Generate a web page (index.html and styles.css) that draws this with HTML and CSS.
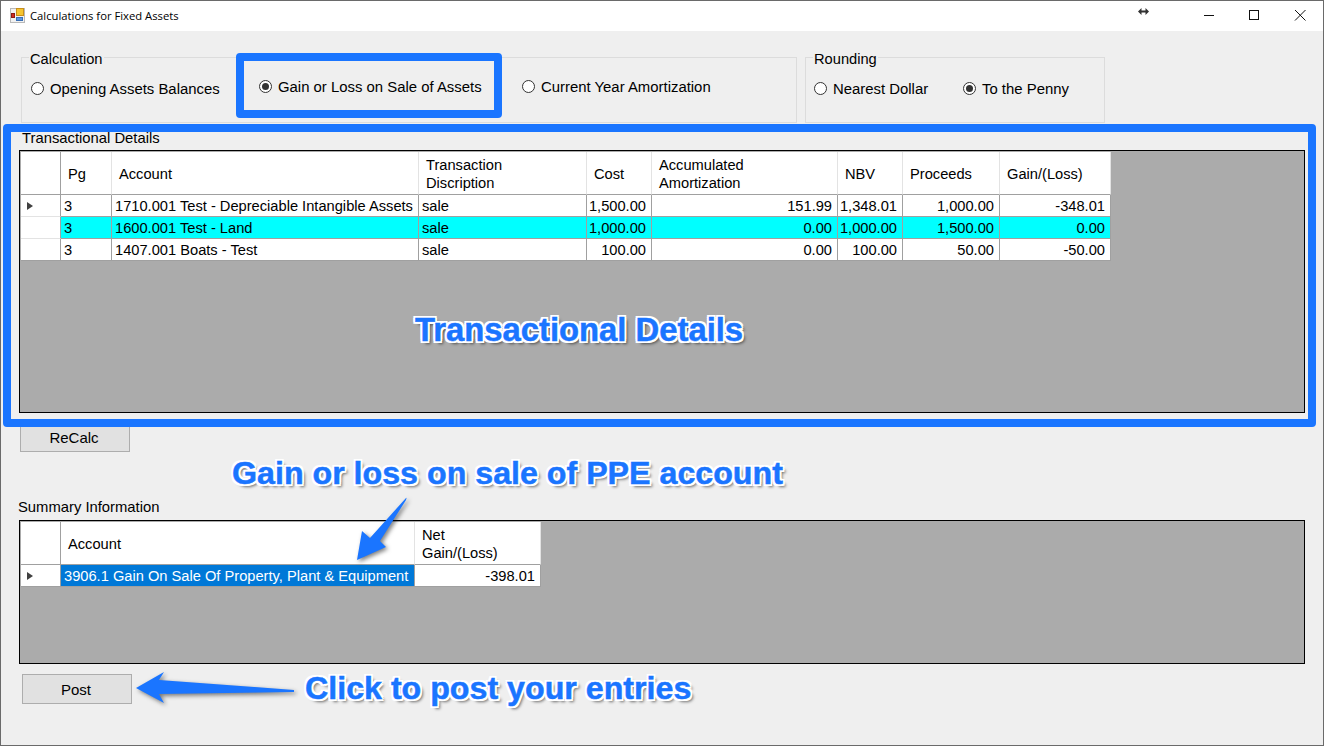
FILE: index.html
```html
<!DOCTYPE html>
<html lang="en">
<head>
<meta charset="utf-8">
<title>Calculations for Fixed Assets</title>
<link rel="stylesheet" href="styles.css">
</head>
<body>
<div class="window">
  <header class="titlebar">
    <svg class="app-icon" width="16" height="16" viewBox="0 0 16 16">
      <rect x="0.5" y="0.5" width="14" height="14" fill="#f1f1f1" stroke="#b9b9b9"/>
      <rect x="6.500" y="0.500" width="7" height="7" fill="#f4c430" stroke="#c98f1a"/>
      <rect x="1.500" y="5.500" width="3" height="4" fill="#d02a20" stroke="#8a1a14"/>
      <rect x="6.500" y="9.500" width="6" height="3" fill="#5c97e0" stroke="#3a6fb5"/>
    </svg>
    <span class="title-text">Calculations for Fixed Assets</span>
    <svg class="cursor-glyph" width="11" height="7" viewBox="0 0 11 7">
      <path d="M0 3.5 3.5 0V2.5H7.5V0L11 3.5 7.5 7V4.5H3.5V7Z" fill="#333"/>
    </svg>
    <div class="win-controls">
      <svg width="46" height="30" viewBox="0 0 46 30"><path d="M19 14.500H29" stroke="#111"/></svg>
      <svg width="46" height="30" viewBox="0 0 46 30"><rect x="18.500" y="9.500" width="9" height="9" fill="none" stroke="#111"/></svg>
      <svg width="46" height="30" viewBox="0 0 46 30"><path d="M18 9 28.500 19.500M28.500 9 18 19.500" stroke="#111" fill="none"/></svg>
    </div>
  </header>

  <main class="content">
    <div class="groups">
      <section class="group group-calc">
        <div class="legend">Calculation</div>
        <div class="options options-calc">
          <label class="option"><span class="radio"></span>Opening Assets Balances</label>
          <label class="option raised"><span class="radio on"></span>Gain or Loss on Sale of Assets</label>
          <label class="option raised"><span class="radio"></span>Current Year Amortization</label>
        </div>
      </section>
      <section class="group group-round">
        <div class="legend">Rounding</div>
        <div class="options options-round">
          <label class="option"><span class="radio"></span>Nearest Dollar</label>
          <label class="option"><span class="radio on"></span>To the Penny</label>
        </div>
      </section>
    </div>

    <div class="section-label details-label">Transactional Details</div>
    <div class="grid grid-details">
      <table class="data">
        <colgroup>
          <col class="c-rh"><col class="c-pg"><col class="c-acct"><col class="c-desc"><col class="c-cost"><col class="c-acc"><col class="c-nbv"><col class="c-proc"><col class="c-gain">
        </colgroup>
        <thead>
          <tr>
            <th></th><th>Pg</th><th>Account</th><th>Transaction<br>Discription</th><th>Cost</th><th>Accumulated<br>Amortization</th><th>NBV</th><th>Proceeds</th><th>Gain/(Loss)</th>
          </tr>
        </thead>
        <tbody>
          <tr>
            <td class="rh"><span class="pointer"></span></td><td>3</td><td>1710.001 Test - Depreciable Intangible Assets</td><td>sale</td><td class="num">1,500.00</td><td class="num">151.99</td><td class="num">1,348.01</td><td class="num">1,000.00</td><td class="num">-348.01</td>
          </tr>
          <tr class="hit">
            <td class="rh"></td><td>3</td><td>1600.001 Test - Land</td><td>sale</td><td class="num">1,000.00</td><td class="num">0.00</td><td class="num">1,000.00</td><td class="num">1,500.00</td><td class="num">0.00</td>
          </tr>
          <tr>
            <td class="rh"></td><td>3</td><td>1407.001 Boats - Test</td><td>sale</td><td class="num">100.00</td><td class="num">0.00</td><td class="num">100.00</td><td class="num">50.00</td><td class="num">-50.00</td>
          </tr>
        </tbody>
      </table>
    </div>

    <button class="btn btn-recalc" type="button">ReCalc</button>

    <div class="section-label summary-label">Summary Information</div>
    <div class="grid grid-summary">
      <table class="data data-summary">
        <colgroup><col class="c-rh"><col class="c-sacct"><col class="c-snet"></colgroup>
        <thead>
          <tr><th></th><th>Account</th><th>Net<br>Gain/(Loss)</th></tr>
        </thead>
        <tbody>
          <tr><td class="rh"><span class="pointer"></span></td><td class="selected">3906.1 Gain On Sale Of Property, Plant &amp; Equipment</td><td class="num">-398.01</td></tr>
        </tbody>
      </table>
    </div>

    <button class="btn btn-post" type="button">Post</button>
  </main>

  <!-- annotations drawn over the window -->
  <div class="callout-box box-gain"></div>
  <div class="callout-box box-details"></div>
  <div class="callout-text text-details">Transactional Details</div>
  <div class="callout-text text-gain">Gain or loss on sale of PPE account</div>
  <div class="callout-text text-post">Click to post your entries</div>
  <svg class="arrow arrow-gain" width="60" height="72" viewBox="0 0 60 72">
    <path d="M53 1 Q54 0 53 3 L27 44 L33 50 L4 63 L9 34 L17 41 Z" fill="#1a75ff"/>
  </svg>
  <svg class="arrow arrow-post" width="166" height="40" viewBox="0 0 166 40">
    <path d="M2 18 L30 2 L25 10 L160 20 L160 22 L25 24 L30 33 Z" fill="#1a75ff"/>
  </svg>
</div>
</body>
</html>
```
FILE: styles.css
```css
* { box-sizing: border-box; }

html, body {
  margin: 0;
  padding: 0;
  width: 1324px;
  height: 746px;
  overflow: hidden;
}

body {
  font-family: "Liberation Sans", Arial, sans-serif;
  font-size: 14.67px;
  color: #000;
  background: #efefef;
}

.window {
  position: relative;
  width: 1324px;
  height: 746px;
  background: #efefef;
  border: 1px solid #6a6a6a;
}

/* title bar */
.titlebar {
  display: flex;
  align-items: center;
  height: 30px;
  background: #fff;
  padding-left: 9px;
}

.app-icon { flex: none; margin-bottom: 1px; }

.title-text {
  margin: 0 0 2px 4px;
  font-family: "Open Sans", "Noto Sans", sans-serif;
  font-size: 11.25px;
  color: #000;
}

.cursor-glyph {
  margin-left: auto;
  margin-right: 36px;
  margin-bottom: 10px;
}

.win-controls { display: flex; }
.win-controls svg { display: block; }

/* main content */
.content {
  display: flex;
  flex-direction: column;
  align-items: flex-start;
  padding-left: 20px;
}

.groups {
  display: flex;
  gap: 8px;
  margin-top: 26px;
}

.group {
  height: 66px;
  border: 1px solid #dcdcdc;
}

.group-calc { width: 776px; }
.group-round { width: 300px; }

.legend {
  width: fit-content;
  margin: -7px 0 0 7px;
  padding: 0 1px;
  line-height: 17px;
  background: #efefef;
}

.options {
  display: grid;
  margin-top: 12px;
  padding-left: 9px;
  font-size: 14.9px;
}

.options-calc { grid-template-columns: 228px 263px auto; }
.options-round { padding-left: 8px; grid-template-columns: 149px auto; }

.option {
  display: flex;
  align-items: center;
  height: 17px;
  white-space: nowrap;
}

.option.raised { margin-top: -2px; }

.radio {
  flex: none;
  position: relative;
  width: 13px;
  height: 13px;
  margin-right: 6px;
  border: 1px solid #333;
  border-radius: 50%;
  background: #fff;
}

.radio.on::after {
  content: "";
  position: absolute;
  left: 2px;
  top: 2px;
  width: 7px;
  height: 7px;
  border-radius: 50%;
  background: #333;
}

.section-label { line-height: 17px; white-space: nowrap; font-size: 14.8px; }
.details-label { margin: 7px 0 0 1px; }
.summary-label { margin: 47px 0 0 -3px; }

/* data grids */
.grid {
  width: 1286px;
  margin-left: -2px;
  padding: 1px;
  border: 1px solid #000;
  background: #ababab;
}

.grid-details { height: 263px; margin-top: 3px; }
.grid-summary { height: 144px; margin-top: 4px; }

.data {
  table-layout: fixed;
  width: 1090px;
  border-collapse: separate;
  border-spacing: 0;
  background: #fff;
}

.data-summary { width: 520px; }

.c-rh { width: 40px; }
.c-pg { width: 51px; }
.c-acct { width: 307px; }
.c-desc { width: 168px; }
.c-cost { width: 65px; }
.c-acc { width: 186px; }
.c-nbv { width: 65px; }
.c-proc { width: 97px; }
.c-gain { width: 111px; }
.c-sacct { width: 354px; }
.c-snet { width: 126px; }

.data th {
  height: 43px;
  padding: 2px 0 0 7px;
  font-weight: normal;
  text-align: left;
  line-height: 18px;
  border-right: 1px solid #e3e3e3;
  border-bottom: 1px solid #a0a0a0;
}

.data th:first-child { border-right-color: #a0a0a0; }

.data td {
  height: 22px;
  padding: 2px 0 0 3px;
  line-height: 19px;
  white-space: nowrap;
  overflow: hidden;
  border-right: 1px solid #a0a0a0;
  border-bottom: 1px solid #a0a0a0;
}

.data td.num { text-align: right; padding: 2px 5px 0 0; }

.data td.rh {
  position: relative;
  padding: 0;
  background: #fff;
  border-bottom-color: #e3e3e3;
}

.data tr:last-child td.rh { border-bottom-color: #a0a0a0; }

.data tr.hit td { background: #00ffff; }
.data tr.hit td.rh { background: #fff; }

.data td.selected { background: #0078d7; color: #fff; }

.pointer {
  position: absolute;
  left: 6px;
  top: 7px;
  border-style: solid;
  border-width: 4.5px 0 4.5px 6px;
  border-color: transparent transparent transparent #404040;
}

/* buttons */
.btn {
  width: 110px;
  height: 30px;
  padding: 0 2px 0 0;
  font-family: inherit;
  font-size: 15px;
  color: #000;
  background: #e1e1e1;
  border: 1px solid #adadad;
}

.btn-recalc { margin: 10px 0 0 -1px; height: 29px; }
.btn-post { margin: 10px 0 0 1px; }

/* annotations */
.callout-box {
  position: absolute;
  border: 8px solid #1a75ff;
  border-radius: 4px;
}

.box-gain { left: 235px; top: 52px; width: 266px; height: 65px; }
.box-details { left: 2px; top: 123px; width: 1313px; height: 303px; }

.callout-text {
  position: absolute;
  font-family: "Liberation Sans", Arial, sans-serif;
  font-weight: bold;
  line-height: 38px;
  white-space: nowrap;
  color: #1a75ff;
  -webkit-text-stroke: 0.5px #1a75ff;
  text-shadow:
    -2px 0 0 #fff, 2px 0 0 #fff, 0 -2px 0 #fff, 0 2px 0 #fff,
    -2px -2px 0 #fff, 2px -2px 0 #fff, -2px 2px 0 #fff, 2px 2px 0 #fff,
    3px 3px 3px rgba(0, 0, 0, 0.55);
}

.text-details { left: 414px; top: 310px; font-size: 32.8px; }
.text-gain { left: 231px; top: 453px; font-size: 32.2px; }
.text-post { left: 304px; top: 668px; font-size: 32.2px; }

.arrow {
  position: absolute;
  overflow: visible;
  filter: drop-shadow(2px 2px 2px rgba(0, 0, 0, 0.5));
}

.arrow-gain { left: 352px; top: 496px; }
.arrow-post { left: 133px; top: 669px; }
```
